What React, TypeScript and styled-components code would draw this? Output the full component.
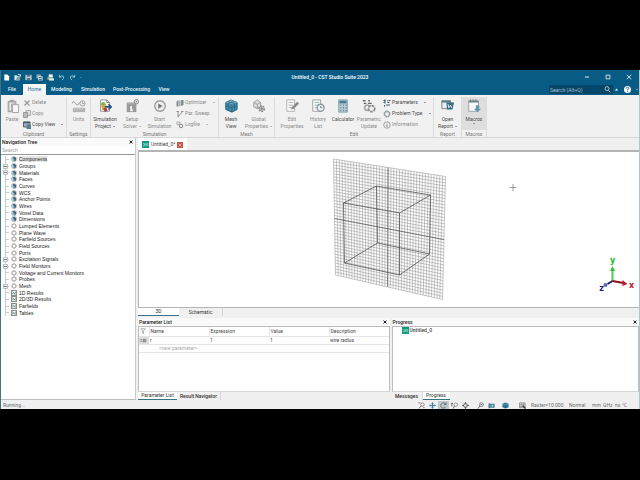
import React from "react";
import styled, { createGlobalStyle, css } from "styled-components";

const UI = 'Roboto, "Open Sans", sans-serif';
const CLASSIC = '"Liberation Sans", Arial, sans-serif';

const Global = createGlobalStyle`
  *, *::before, *::after { box-sizing: border-box; }
  body { margin: 0; background: #000; }
  button, input { font: inherit; color: inherit; margin: 0; padding: 0; border: 0; background: none; border-radius: 0; outline: 0; }
  ul { list-style: none; margin: 0; padding: 0; }
  svg { display: block; flex: none; }
`;

const Screen = styled.div`
  min-height: 100vh;
  display: flex;
  flex-direction: column;
  padding: 70px 0 71px;
  background: #000;
`;
const Window = styled.div`
  flex: 1;
  display: flex;
  flex-direction: column;
  border: solid #3f7480;
  border-width: 0 1px;
  border-right-color: #a9c8c8;
  background: #f0f0f0;
  font: 5px/7px ${UI};
  color: #333;
`;

/* ---------- title and ribbon tabs ---------- */
const TitleBar = styled.header`
  display: grid;
  grid-template-columns: 1fr auto 1fr;
  align-items: center;
  height: 14px;
  background: #075b84;
  color: #fff;
`;
const QuickAccess = styled.div`
  display: flex;
  align-items: center;
  color: #6fa3bd;
`;
const QuickButton = styled.button`
  width: 11px;
  height: 10px;
  display: grid;
  place-items: center;
`;
const Title = styled.div`
  margin-left: 20px;
  font-weight: 500;
  white-space: nowrap;
`;
const WindowButtons = styled.div`
  display: flex;
  justify-content: flex-end;
`;
const WindowButton = styled.button`
  width: 21px;
  height: 12px;
  display: grid;
  place-items: center;
`;
const TabBar = styled.nav`
  display: flex;
  align-items: center;
  height: 11px;
  background: #075b84;
  color: #e9f2f6;
`;
const RibbonTab = styled.button<{ $active?: boolean; $w: number }>`
  width: ${(p) => p.$w}px;
  height: 11px;
  line-height: 11px;
  text-align: center;
  font-weight: 500;
  white-space: nowrap;
  ${(p) => p.$active && css`background: #f3f5f6; color: #4a86a5;`}
`;
const SearchBox = styled.label`
  display: flex;
  align-items: center;
  width: 64px;
  height: 9px;
  margin-left: auto;
  padding: 0 2px 0 1px;
  background: #064668;
  input { flex: 1; min-width: 0; height: 8px; }
  input::placeholder { color: #a9bfcb; opacity: 1; }
`;
const HelpArea = styled.div`
  display: flex;
  align-items: center;
  justify-content: flex-end;
  gap: 5px;
  width: 26px;
  padding-right: 1px;
`;

/* ---------- ribbon ---------- */
const Ribbon = styled.div`
  display: flex;
  height: 43px;
  padding-top: 2px;
  border-bottom: 1px solid #d9d9d9;
  background: #f1f1f1;
`;
const Group = styled.section`
  display: flex;
  flex-direction: column;
  border-right: 1px solid #dcdcdc;
`;
const GroupBody = styled.div`
  display: flex;
  height: 33px;
`;
const GroupName = styled.div`
  padding-top: 1px;
  line-height: 7px;
  text-align: center;
  color: #777;
`;
const BigButton = styled.button<{ $w: number; $dim?: boolean; $pressed?: boolean }>`
  width: ${(p) => p.$w}px;
  height: 33px;
  padding-top: 2px;
  display: flex;
  flex-direction: column;
  align-items: center;
  color: ${(p) => (p.$dim ? "#8a8a8a" : "#4c4c4c")};
  background: ${(p) => (p.$pressed ? "#dedede" : "none")};
  svg { margin-bottom: 3px; }
`;
const BigLabel = styled.span`
  line-height: 7px;
  white-space: pre;
`;
const SmallColumn = styled.div<{ $w: number; $pad?: number }>`
  width: ${(p) => p.$w}px;
  padding-left: ${(p) => p.$pad ?? 0}px;
  display: grid;
  grid-template-rows: repeat(3, 11px);
`;
const SmallButton = styled.button<{ $dim?: boolean }>`
  display: flex;
  align-items: center;
  gap: 1px;
  white-space: nowrap;
  color: ${(p) => (p.$dim ? "#8a8a8a" : "#4c4c4c")};
`;
const Caret = styled.span<{ $gap?: number }>`
  display: inline-block;
  vertical-align: middle;
  margin-left: ${(p) => p.$gap ?? 2}px;
  border: solid transparent;
  border-width: 1px 1px 0;
  border-top-color: currentColor;
`;

/* ---------- panels ---------- */
const Body = styled.div`
  flex: 1;
  display: grid;
  grid-template-columns: 135px minmax(0, 1fr);
  column-gap: 2px;
`;
const NavPanel = styled.aside`
  display: flex;
  flex-direction: column;
  background: #fff;
  border-right: 1px solid #c9c9c9;
  border-bottom: 1px solid #bcbcbc;
  font-family: ${CLASSIC};
`;
const PanelHeader = styled.div`
  display: flex;
  align-items: center;
  justify-content: space-between;
  height: 8px;
  padding: 0 2px 0 1px;
  background: #fafafa;
  color: #222;
  font: 500 5px/8px ${UI};
`;
const CloseButton = styled.button`
  width: 5px;
  height: 7px;
  display: grid;
  place-items: center;
`;
const NavSearch = styled.input`
  width: 100%;
  height: 9px;
  padding: 0 1px;
  border-bottom: 1px solid #999;
  background: #fff;
  &::placeholder { color: #999; opacity: 1; }
`;
const Tree = styled.ul`
  display: grid;
  grid-template-rows: repeat(24, minmax(0, 1fr));
  height: 160px;
  margin-top: 1px;
  color: #222;
`;
const TreeRow = styled.li`
  display: flex;
  align-items: center;
  gap: 2px;
  padding-left: 1px;
  white-space: nowrap;
`;
const Selected = styled.span<{ $on: boolean }>`
  line-height: 6px;
  background: ${(p) => (p.$on ? "#e6e6e6" : "none")};
`;
const Main = styled.main`
  display: flex;
  flex-direction: column;
  min-width: 0;
`;
const DocTabs = styled.div`
  display: flex;
  height: 12px;
`;
const DocTab = styled.div`
  display: flex;
  align-items: center;
  gap: 2px;
  width: 49px;
  padding: 1px 0 0 4px;
  background: #fff;
  color: #444;
  white-space: nowrap;
`;
const DocClose = styled.button`
  width: 6px;
  height: 6px;
  display: grid;
  place-items: center;
  color: #fff;
  background: #c65343;
`;
const Viewport = styled.div`
  flex: 1;
  min-height: 0;
  border: solid #b4b4b4;
  border-width: 2px 0 1px 1px;
  background: #fff;
  svg { width: 100%; height: 155px; }
`;
const TabStrip = styled.div<{ $h: number }>`
  display: flex;
  height: ${(p) => p.$h}px;
  line-height: 7px;
`;
const StripTab = styled.button<{ $w: number; $active?: boolean; $bold?: boolean }>`
  width: ${(p) => p.$w}px;
  height: 8px;
  text-align: center;
  white-space: nowrap;
  color: #333;
  font-weight: ${(p) => (p.$bold ? 500 : 400)};
  ${(p) =>
    p.$active
      ? css`background: #fff; border-bottom: 1px solid #337487;`
      : css`border-right: 1px solid #d4d4d4;`}
`;
const Docks = styled.div`
  display: grid;
  grid-template-columns: minmax(0, 251fr) minmax(0, 247fr);
  column-gap: 2px;
  height: 82px;
`;
const Dock = styled.section`
  display: flex;
  flex-direction: column;
`;
const DockBody = styled.div`
  flex: 1;
  border: 1px solid #bdbdbd;
  border-bottom-color: #d6d6d6;
  background: #fff;
`;
const ParamTable = styled.table`
  width: 100%;
  border-collapse: collapse;
  table-layout: fixed;
  color: #444;
  th, td { height: 8px; padding: 0 0 0 1px; font-weight: 400; text-align: left; line-height: 7px; border-bottom: 1px solid #e4e4e4; }
  th { height: 9px; }
  th + th { border-left: 1px solid #e8e8e8; }
`;
const MarkCell = styled.td`
  background: #dedede;
`;
const NewParam = styled.td`
  && { color: #aaa; padding-left: 20px; }
`;
const ProgressItem = styled.div`
  display: flex;
  align-items: center;
  gap: 1px;
  padding: 0 9px;
  font-weight: 500;
  color: #444;
`;
const StatusBar = styled.footer`
  display: flex;
  align-items: center;
  height: 9px;
  padding: 1px 11px 0 2px;
  color: #6c6c6c;
`;
const StatusTools = styled.div`
  display: flex;
  align-items: center;
  margin-left: auto;
`;
const StatusButton = styled.button<{ $on?: boolean; $gap?: number }>`
  width: 11px;
  height: 8px;
  margin-right: ${(p) => p.$gap ?? 0}px;
  display: grid;
  place-items: center;
  background: ${(p) => (p.$on ? "#c3c9cd" : "none")};
`;
const StatusText = styled.span<{ $w: number }>`
  width: ${(p) => p.$w}px;
  white-space: nowrap;
`;

/* ---------- icons ---------- */
const T = "#2c7896";
const drawings: Record<string, React.ReactNode> = {
  paste: (<><path d="M3 2H13V6H8V15H3Z" fill="#aaa" /><path d="M5 4H11V5H7V13H5Z" fill="#eee" /><path d="M6 1H10V3H6Z" fill="#999" /><path d="M8.500 6.500H15.500V15.500H8.500Z" fill="#f8f8f8" stroke="#999" /></>),
  units: (<><path d="M0 5Q2 1 4 5T9 4" fill="none" stroke="#888" /><circle cx="12" cy="5" r="3" fill="#eee" stroke="#999" /><path d="M12 3V5H14" stroke="#999" fill="none" /><path d="M1 10H15V15H1Z" fill="#b4b4b4" /><path d="M3 10V12M6 10V12M9 10V12M12 10V12" stroke="#ddd" /></>),
  project: (<><path d="M3 1H10L13 4V14H3Z" fill="#fff" stroke="#888" /><path d="M10 1V4H13" fill="none" stroke="#777" /><circle cx="6" cy="6" r="2.500" fill="#79b843" /><path d="M4 8L9 6L9 11L5 13Z" fill="#e1a32d" /><path d="M8 9H15M12 6L15 9L12 12" stroke="#245a80" strokeWidth="2" fill="none" /><path d="M6 11L9 9L11 13L8 15Z" fill="#a84556" /></>),
  solver: (<><path d="M2 4H13V15H2Z" fill="#999" /><path d="M3 5H12V6H3Z" fill="#bbb" /><path d="M7 8V12M6 13H9" stroke="#f4f4f4" strokeWidth="2" /><circle cx="13" cy="3" r="2.500" fill="#ddd" stroke="#888" /><circle cx="13" cy="3" r=".8" fill="#888" /></>),
  start: (<><circle cx="8" cy="8" r="6" fill="#eee" stroke="#999" strokeWidth="1.500" /><path d="M6 5L11 8L6 11Z" fill="#777" /></>),
  mesh: (<><path d="M2 4L8 1L15 4V12L9 15L2 12Z" fill="#438da9" stroke="#225f7c" /><path d="M2 4L9 6L15 4L8 1Z" fill="#77b3c6" /><path d="M2 8L9 10L15 8M9 6V15M5 5V13M12 5V13M5 3L12 5M11 3L5 5" stroke="#225f7c" strokeWidth=".8" fill="none" /></>),
  gears: (<><path d="M2 4L6 1L10 4V9L6 11L2 9Z" fill="#ddd" stroke="#999" /><path d="M2 4L6 6L10 4M6 6V11" stroke="#999" fill="none" /><circle cx="11" cy="11" r="3" fill="#ddd" stroke="#888" strokeWidth="2" strokeDasharray="2 1" /><circle cx="11" cy="11" r="1.500" fill="#888" /></>),
  edit: (<><path d="M2 1H11V14H2Z" fill="#fafafa" stroke="#aaa" /><path d="M4 4H9M4 7H9M4 10H8" stroke="#aaa" /><path d="M7 12L8 9L14 3L16 5L10 11Z" fill="#888" /></>),
  history: (<><path d="M2 1H11V14H2Z" fill="#fafafa" stroke="#999" /><path d="M4 4H9M4 7H8M4 10H7" stroke="#8aa" /><circle cx="11" cy="10" r="4" fill="#eaf1f1" stroke="#83999e" strokeWidth="1.500" /><path d="M11 8V10H13" stroke="#777" fill="none" /></>),
  calc: (<><path d="M3 1H13V15H3Z" fill="#b9cbd2" stroke="#7f9ba5" /><path d="M4 2H12V5H4Z" fill="#417f97" /><path d="M5 7H6M8 7H9M11 7H12M5 10H6M8 10H9M11 10H12M5 13H6M8 13H9M11 13H12" stroke="#53798a" strokeWidth="1.500" /></>),
  parametric: (<><path d="M1 2H4M2 5H5M7 2H9M7 5H11" stroke="#666" strokeWidth="1.500" /><circle cx="6" cy="10" r="3" fill="none" stroke="#aaa" strokeWidth="2" /><circle cx="11" cy="11" r="3.500" fill="#eee" stroke="#888" strokeWidth="2" strokeDasharray="3 1" /></>),
  report: (<><path d="M1 2H11V11H1Z" fill="#eee" stroke="#777" /><path d="M1 2H11V4H1Z" fill="#537a8d" /><path d="M6 4H15L13 12H7Z" fill="#356b83" /><path d="M8 6L9 10L11 7L12 10" stroke="#fff" fill="none" /></>),
  macros: (<><path d="M2 2H13V14H2Z" fill="#fafafa" stroke="#929ca0" /><path d="M2 2H13V4H2Z" fill="#66848f" /><path d="M4 0V3M7 0V3M10 0V3" stroke="#888" /><path d="M10 7H14V11H16L12 15L8 11H10Z" fill="#5e9ab2" /></>),
  delete: <path d="M3 3L13 13M13 3L3 13" stroke="#999" strokeWidth="2.500" />,
  copy: (<><path d="M6 1H15V11H6Z" fill="#ddd" stroke="#999" strokeWidth="1.500" /><path d="M1 5H9V15H1Z" fill="#bbb" stroke="#888" strokeWidth="1.500" /></>),
  copyview: (<><path d="M1 2H14V12H1Z" fill="#aac" stroke="#566" strokeWidth="2" /><path d="M1 3H14" stroke="#456" strokeWidth="3" /><path d="M7 7H16V16H7Z" fill="#56808f" /></>),
  optimizer: (<><path d="M1 5L5 2V15H1Z" fill="#888" /><path d="M6 3H9V14H6Z" fill="#aaa" /><path d="M10 2H15V12L10 14Z" fill="#79909a" /></>),
  sweep: <path d="M1 3H6M4 3V14L13 3M10 3H15" stroke="#777" strokeWidth="1.500" fill="none" />,
  log: (<><path d="M2 2H8V7H2Z" fill="none" stroke="#aaa" strokeWidth="2" /><circle cx="10" cy="10" r="3.500" fill="#eee" stroke="#888" strokeWidth="2" /></>),
  params: <path d="M1 3H5M1 7H4M4 1V9M6 12H14M8 4H10M11 3H15M3 12V15M9 7H13" stroke="#456" strokeWidth="2" />,
  problem: (<><circle cx="8" cy="8" r="5.500" fill="none" stroke="#8a979c" strokeWidth="3" strokeDasharray="3 1.300" /><circle cx="8" cy="8" r="4.500" fill="none" stroke="#8a979c" /></>),
  info: (<><circle cx="8" cy="8" r="6.500" fill="none" stroke="#888" strokeWidth="1.500" /><path d="M8 4V5M8 7V12" stroke="#777" strokeWidth="2" /></>),
  file: <path d="M3 1H10L14 5V15H3Z" fill="#fff" />,
  open: (<><path d="M1 3H6L8 5H13V14H1Z" fill="#dbe6ea" /><path d="M7 7L15 6L12 15H4Z" fill="#7ea0a9" /><path d="M9 1L15 2L14 6" stroke="#fff" fill="none" strokeWidth="2" /></>),
  save: (<><path d="M1 2H15V14H1Z" fill="#c4d2d9" /><path d="M4 2H12V6H4ZM4 9H12V14H4Z" fill="#55717e" /></>),
  saveall: (<><path d="M1 1H11V10H1Z" fill="#8ba6b2" /><path d="M5 5H15V15H5Z" fill="#d0dce1" /><path d="M7 7H13V9H7ZM7 11H13V15H7Z" fill="#466c7e" /></>),
  print: (<><path d="M4 1H13V7H4Z" fill="#fff" /><path d="M1 7H14V13H1Z" fill="#92b4a9" /><path d="M5 10H16V15H5Z" fill="#e1ecda" /></>),
  undo: (<path d="M3 2V7H8M3 7Q9 1 13 6Q14 10 9 14" fill="none" stroke="#9fc8dc" strokeWidth="2" />),
  redo: (<path d="M13 2V7H8M13 7Q7 1 3 6Q2 10 7 14" fill="none" stroke="#9fc8dc" strokeWidth="2" />),
  min: <path d="M3 8H13" stroke="#fff" strokeWidth="2.500" />,
  max: <path d="M3 3H13V13H3Z" stroke="#fff" strokeWidth="2" fill="none" />,
  close: <path d="M2 2L14 14M14 2L2 14" stroke="currentColor" strokeWidth="2" />,
  closeBold: <path d="M2 2L14 14M14 2L2 14" stroke="currentColor" strokeWidth="4" />,
  search: (<><circle cx="7" cy="6" r="4.500" fill="none" stroke="#bcd0da" strokeWidth="2" /><path d="M10 10L15 15" stroke="#bcd0da" strokeWidth="2" /></>),
  up: <path d="M3 11L8 5L13 11Z" fill="#fff" />,
  help: (<><circle cx="8" cy="8" r="8" fill="#fff" /><path d="M5 6Q5 3 8 3T11 6Q11 8 8 8V10M8 12V14" stroke="#275f7c" strokeWidth="2" fill="none" /></>),
  cst: (<><path d="M0 0H16V16H0Z" fill="#0e9c80" /><path d="M2 6H6V11H2M8 11V6H11V11M13 5V12" stroke="#a6e3d3" strokeWidth="1.500" fill="none" /></>),
  folder: (<><circle cx="8" cy="8" r="7" fill="#d9e2e5" stroke="#91a0a5" strokeWidth="1.500" /><path d="M5 3H11L13 6V12L9 14V8L4 6Z" fill="#29566c" /><path d="M4 8L8 9V13L5 11Z" fill="#5c99ae" /></>),
  gear: (<><circle cx="8" cy="8" r="5.500" fill="#fff" stroke="#999" strokeWidth="2.500" /><circle cx="8" cy="8" r="7" fill="none" stroke="#999" strokeWidth="1" strokeDasharray="2 2" /></>),
  result: (<><path d="M1 1H15V15H1Z" fill="#edf2f2" stroke="#555" strokeWidth="2" /><path d="M3 12L6 7L10 11L13 4M3 4L12 12" stroke="#456d70" strokeWidth="1.500" fill="none" /></>),
  filter: <path d="M2 2H14L9 8V15L7 13V8Z" fill="none" stroke="#777" strokeWidth="1.500" />,
  mark: (<><path d="M1 6H5M1 10H5M13 4V12" stroke="#777" strokeWidth="2" /><path d="M7 4H11V12H7Z" fill="#888" /></>),
  zoomArea: (<><circle cx="10" cy="6" r="4" fill="none" stroke="#666" strokeWidth="1.500" /><path d="M7 9L2 15M1 2H5M12 13H15" stroke="#666" strokeWidth="2" /></>),
  lens: (<><circle cx="10" cy="6" r="4.500" fill="none" stroke="#555" strokeWidth="1.500" /><path d="M7 9L2 15M8 6H12" stroke="#555" strokeWidth="2" /></>),
  pan: <path d="M8 1V15M1 8H15M6 4L8 2L10 4M6 12L8 14L10 12M4 6L2 8L4 10M12 6L14 8L12 10" stroke={T} strokeWidth="2" fill="none" />,
  rotate: (<><path d="M13 5A6 6 0 1 0 13 11" stroke="#4b6d7d" strokeWidth="2" fill="none" /><path d="M9 6H14V1" stroke="#4b6d7d" strokeWidth="2" fill="none" /></>),
  zoomDyn: (<><circle cx="11" cy="6" r="4" fill="none" stroke="#777" strokeWidth="1.500" /><path d="M8 9L5 15M2 2V10M0 4L2 2L4 4" stroke="#555" strokeWidth="2" fill="none" /></>),
  fit: (<><path d="M8 0L11 4H5ZM8 16L5 12H11ZM0 8L4 5V11ZM16 8L12 5V11Z" fill="#333" /><circle cx="8" cy="8" r="3.500" fill="none" stroke="#555" strokeWidth="1.500" /></>),
  cubeWin: (<><path d="M1 4L5 2V14H1Z" fill="#6a7f89" /><path d="M5 4H15V13H5Z" fill={T} /><path d="M8 6H12V11H8Z" fill="#b7d4de" /></>),
  cube: (<><path d="M8 1L15 4V12L8 15L1 12V4Z" fill={T} /><path d="M1 4L8 7L15 4" stroke="#9ac5d1" fill="none" /><path d="M8 7V15" stroke="#174d65" /></>),
  grid: (<><path d="M1 2H14V13H1Z" fill="#ddd" stroke="#777" strokeWidth="1.500" /><path d="M5 2V13M10 2V13M1 6H14M1 10H14" stroke="#777" /><path d="M8 8L15 15" stroke="#444" strokeWidth="3" /></>),
};
const Icon = ({ name, size = 7 }: { name: string; size?: number }) => (
  <svg width={size} height={size} viewBox="0 0 16 16" aria-hidden="true">{drawings[name]}</svg>
);

const Big = ({ icon, label, w, dim, caret, pressed }: { icon: string; label: string; w: number; dim?: boolean; caret?: boolean; pressed?: boolean }) => (
  <BigButton $w={w} $dim={dim} $pressed={pressed}>
    <Icon name={icon} size={14} />
    <BigLabel>{label}{caret && <Caret />}</BigLabel>
    {pressed && <Caret $gap={0} />}
  </BigButton>
);
const Small = ({ icon, label, dim, caret }: { icon: string; label: string; dim?: boolean; caret?: number }) => (
  <SmallButton $dim={dim}><Icon name={icon} size={8} />{label}{caret && <Caret $gap={caret} />}</SmallButton>
);

const tree: [string, string, boolean?][] = [
  ["Components", "folder"], ["Groups", "folder", true], ["Materials", "folder", true], ["Faces", "folder"],
  ["Curves", "folder"], ["WCS", "folder"], ["Anchor Points", "folder"], ["Wires", "folder"],
  ["Voxel Data", "folder"], ["Dimensions", "folder"], ["Lumped Elements", "gear"], ["Plane Wave", "gear"],
  ["Farfield Sources", "gear"], ["Field Sources", "gear"], ["Ports", "gear"], ["Excitation Signals", "gear", true],
  ["Field Monitors", "gear", true], ["Voltage and Current Monitors", "gear"], ["Probes", "gear"], ["Mesh", "gear", true],
  ["1D Results", "result"], ["2D/3D Results", "result"], ["Farfields", "result"], ["Tables", "result"],
];

const Branch = ({ box }: { box?: boolean }) => (
  <svg width="7" height="7" viewBox="0 0 7 7" aria-hidden="true">
    <path d="M3.500 0V7M3.500 3.500H7" stroke="#ccc" />
    {box && <><path d="M1.500 1.500H5.500V5.500H1.500Z" fill="#fff" stroke="#bbb" /><path d="M2 3.500H5" stroke="#777" /></>}
  </svg>
);

/* ---------- 3D view ---------- */
type P = [number, number];
const TL: P = [194, 7], TR: P = [306, 24.500], BR: P = [303, 147.500], BL: P = [196, 123];
const mix = (a: P, b: P, t: number): P => [a[0] + (b[0] - a[0]) * t, a[1] + (b[1] - a[1]) * t];
const line = (a: P, b: P) => `M${a[0].toFixed(2)} ${a[1].toFixed(2)}L${b[0].toFixed(2)} ${b[1].toFixed(2)}`;
const CELLS = 39;
const column = (i: number) => line(mix(TL, TR, i / CELLS), mix(BL, BR, i / CELLS));
const row = (i: number) => line(mix(TL, BL, i / CELLS), mix(TR, BR, i / CELLS));
const gridPath = Array.from({ length: CELLS + 1 }, (_, i) => column(i) + row(i)).join("");
const axisPath = column(19) + row(20);

const Scene = () => (
  <svg viewBox="0 0 499 155" role="img" aria-label="3D model view">
    <path d={gridPath} stroke="#8f8f8f" strokeWidth=".5" fill="none" />
    <path d={axisPath} stroke="#666" strokeWidth=".8" fill="none" />
    <path d="M204 51L260 61V123L205 111ZM204 51L237 34L291 43L260 61M291 43L290 102L260 123M290 102L238 91L205 111M237 34L238 91" stroke="#444" strokeWidth=".7" fill="none" />
    <path d="M370 35.500H377M373.500 32V39" stroke="#777" strokeWidth=".7" />
    <path d="M473 129V118" stroke="#4ad04a" strokeWidth="2" />
    <path d="M470.500 119L473 114L475.500 119Z" fill="#30c030" />
    <path d="M473 129L484 131" stroke="#8c1020" strokeWidth="2" />
    <path d="M483 128L488 132L483 134Z" fill="#b32030" />
    <path d="M473 129L468 132" stroke="#1b1b70" strokeWidth="2" />
    <circle cx="466" cy="133" r="2" fill="#6068b0" />
    <g fontFamily='"DejaVu Sans", sans-serif' fontWeight="700" fontSize="8" textAnchor="middle">
      <text x="473" y="111" fill="#18b818">y</text>
      <text x="492" y="136" fill="#c01828">x</text>
      <text x="462" y="139" fill="#1c1c90">z</text>
    </g>
  </svg>
);

export default function App() {
  return (
    <Screen>
      <Global />
      <Window>
        <TitleBar>
          <QuickAccess>
            {["file", "open", "save", "saveall", "print", "undo", "redo"].map((n) => (
              <QuickButton key={n} aria-label={n}><Icon name={n} size={7} /></QuickButton>
            ))}
            <Caret />
          </QuickAccess>
          <Title>Untitled_0 - CST Studio Suite 2023</Title>
          <WindowButtons>
            {["min", "max", "close"].map((n) => (
              <WindowButton key={n} aria-label={n}><Icon name={n} size={6} /></WindowButton>
            ))}
          </WindowButtons>
        </TitleBar>
        <TabBar>
          <RibbonTab $w={22}>File</RibbonTab>
          <RibbonTab $w={23} $active>Home</RibbonTab>
          <RibbonTab $w={31}>Modeling</RibbonTab>
          <RibbonTab $w={32}>Simulation</RibbonTab>
          <RibbonTab $w={45}>Post-Processing</RibbonTab>
          <RibbonTab $w={20}>View</RibbonTab>
          <SearchBox>
            <input type="text" aria-label="Search commands" placeholder="Search (Alt+Q)" />
            <Icon name="search" size={7} />
          </SearchBox>
          <HelpArea>
            <Icon name="up" size={5} />
            <Icon name="help" size={7} />
            <Caret $gap={0} />
          </HelpArea>
        </TabBar>
        <Ribbon>
          <Group>
            <GroupBody>
              <Big icon="paste" label="Paste" w={22} dim />
              <SmallColumn $w={43}>
                <Small icon="delete" label="Delete" dim />
                <Small icon="copy" label="Copy" dim />
                <Small icon="copyview" label="Copy View" caret={5} />
              </SmallColumn>
            </GroupBody>
            <GroupName>Clipboard</GroupName>
          </Group>
          <Group>
            <GroupBody><Big icon="units" label="Units" w={23} dim /></GroupBody>
            <GroupName>Settings</GroupName>
          </Group>
          <Group>
            <GroupBody>
              <Big icon="project" label={"Simulation\nProject"} w={28} caret />
              <Big icon="solver" label={"Setup\nSolver"} w={26} dim caret />
              <Big icon="start" label={"Start\nSimulation"} w={29} dim />
              <SmallColumn $w={44} $pad={2}>
                <Small icon="optimizer" label="Optimizer" dim caret={5} />
                <Small icon="sweep" label="Par. Sweep" dim />
                <Small icon="log" label="Logfile" dim caret={5} />
              </SmallColumn>
            </GroupBody>
            <GroupName>Simulation</GroupName>
          </Group>
          <Group>
            <GroupBody>
              <Big icon="mesh" label={"Mesh\nView"} w={24} />
              <Big icon="gears" label={"Global\nProperties"} w={31} dim caret />
            </GroupBody>
            <GroupName>Mesh</GroupName>
          </Group>
          <Group>
            <GroupBody>
              <Big icon="edit" label={"Edit\nProperties"} w={34} dim />
              <Big icon="history" label={"History\nList"} w={18} dim />
              <Big icon="calc" label="Calculator" w={32} />
              <Big icon="parametric" label={"Parametric\nUpdate"} w={20} dim />
              <SmallColumn $w={54} $pad={4}>
                <Small icon="params" label="Parameters" caret={5} />
                <Small icon="problem" label="Problem Type" caret={5} />
                <Small icon="info" label="Information" dim />
              </SmallColumn>
            </GroupBody>
            <GroupName>Edit</GroupName>
          </Group>
          <Group>
            <GroupBody><Big icon="report" label={"Open\nReport"} w={27} caret /></GroupBody>
            <GroupName>Report</GroupName>
          </Group>
          <Group>
            <GroupBody><Big icon="macros" label="Macros" w={24} pressed /></GroupBody>
            <GroupName>Macros</GroupName>
          </Group>
        </Ribbon>
        <Body>
          <NavPanel>
            <PanelHeader>Navigation Tree<CloseButton aria-label="Close navigation tree"><Icon name="closeBold" size={4} /></CloseButton></PanelHeader>
            <NavSearch type="text" aria-label="Search tree" placeholder="Search" />
            <Tree>
              {tree.map(([name, icon, box], i) => (
                <TreeRow key={name}>
                  <Branch box={box} />
                  <Icon name={icon} size={6} />
                  <Selected $on={i === 0}>{name}</Selected>
                </TreeRow>
              ))}
            </Tree>
          </NavPanel>
          <Main>
            <DocTabs>
              <DocTab><Icon name="cst" size={7} />Untitled_0*<DocClose aria-label="Close document"><Icon name="close" size={4} /></DocClose></DocTab>
            </DocTabs>
            <Viewport><Scene /></Viewport>
            <TabStrip $h={10}>
              <StripTab $w={41} $active>3D</StripTab>
              <StripTab $w={44}>Schematic</StripTab>
            </TabStrip>
            <Docks>
              <Dock>
                <PanelHeader>Parameter List<CloseButton aria-label="Close parameter list"><Icon name="closeBold" size={4} /></CloseButton></PanelHeader>
                <DockBody>
                  <ParamTable>
                    <colgroup><col width="10" /><col width="60" /><col width="60" /><col width="60" /><col /></colgroup>
                    <thead><tr><th aria-label="Filter"><Icon name="filter" size={6} /></th><th>Name</th><th>Expression</th><th>Value</th><th>Description</th></tr></thead>
                    <tbody>
                      <tr><MarkCell><Icon name="mark" size={7} /></MarkCell><td>r</td><td>1</td><td>1</td><td>wire radius</td></tr>
                      <tr><NewParam colSpan={5}>&lt;new parameter&gt;</NewParam></tr>
                    </tbody>
                  </ParamTable>
                </DockBody>
                <TabStrip $h={8}>
                  <StripTab $w={39} $active>Parameter List</StripTab>
                  <StripTab $w={44} $bold>Result Navigator</StripTab>
                </TabStrip>
              </Dock>
              <Dock>
                <PanelHeader>Progress<CloseButton aria-label="Close progress"><Icon name="closeBold" size={4} /></CloseButton></PanelHeader>
                <DockBody><ProgressItem><Icon name="cst" size={7} />Untitled_0</ProgressItem></DockBody>
                <TabStrip $h={8}>
                  <StripTab $w={31} $bold>Messages</StripTab>
                  <StripTab $w={27} $active>Progress</StripTab>
                </TabStrip>
              </Dock>
            </Docks>
          </Main>
        </Body>
        <StatusBar>
          Running...
          <StatusTools>
            <StatusButton aria-label="Zoom"><Icon name="zoomArea" /></StatusButton>
            <StatusButton aria-label="Pan"><Icon name="pan" /></StatusButton>
            <StatusButton aria-label="Rotate" $on><Icon name="rotate" /></StatusButton>
            <StatusButton aria-label="Dynamic zoom"><Icon name="zoomDyn" /></StatusButton>
            <StatusButton aria-label="Fit" $gap={4}><Icon name="fit" /></StatusButton>
            <StatusButton aria-label="Reset view"><Icon name="lens" /></StatusButton>
            <StatusButton aria-label="View options" $gap={3}><Icon name="cubeWin" /></StatusButton>
            <StatusButton aria-label="Perspective" $gap={6}><Icon name="cube" /></StatusButton>
            <StatusButton aria-label="Raster settings" $gap={3}><Icon name="grid" /></StatusButton>
            <StatusText $w={38}>Raster=10.000</StatusText>
            <StatusText $w={23}>Normal</StatusText>
            <StatusText $w={11}>mm</StatusText>
            <StatusText $w={12}>GHz</StatusText>
            <StatusText $w={7}>ns</StatusText>
            <StatusText $w={6}>°C</StatusText>
          </StatusTools>
        </StatusBar>
      </Window>
    </Screen>
  );
}
